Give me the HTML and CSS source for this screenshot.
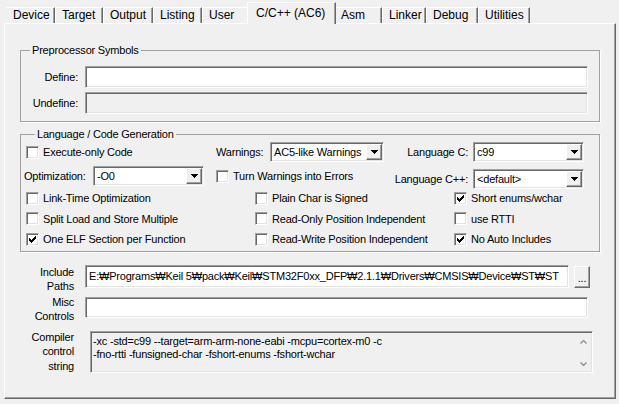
FILE: index.html
```html
<!DOCTYPE html>
<html lang="en">
<head>
    <meta charset="UTF-8">
    <title>Options for Target - C/C++ (AC6)</title>
    <link rel="stylesheet" href="styles.css">
</head>
<body>
    <div class="tabs">
        <div class="tab tab-device">Device</div>
        <div class="tab tab-target">Target</div>
        <div class="tab tab-output">Output</div>
        <div class="tab tab-listing">Listing</div>
        <div class="tab tab-user">User</div>
        <div class="tab active">C/C++ (AC6)</div>
        <div class="tab tab-asm">Asm</div>
        <div class="tab tab-linker">Linker</div>
        <div class="tab tab-debug">Debug</div>
        <div class="tab tab-utilities">Utilities</div>
    </div>

    <div class="panel">
        <fieldset class="group group-pre">
            <legend>Preprocessor Symbols</legend>
            <div class="pre-grid">
                <span class="lbl-right">Define:</span>
                <div class="edit"></div>
                <span class="lbl-right">Undefine:</span>
                <div class="edit disabled"></div>
            </div>
        </fieldset>

        <fieldset class="group group-lang">
            <legend>Language / Code Generation</legend>
            <div class="lang-row row-first">
                <label class="opt cell-first"><span class="check"></span>Execute-only Code</label>
                <span class="lbl-warn">Warnings:</span>
                <div class="combo combo-warn">
                    <span class="combo-text">AC5-like Warnings</span>
                    <span class="combo-btn"><svg width="7" height="4" viewBox="0 0 7 4"><path d="M0 0h7v1H0zM1 1h5v1H1zM2 2h3v1H2zM3 3h1v1H3z" fill="#000"/></svg></span>
                </div>
                <div class="right-field">
                    <span>Language C:</span>
                    <div class="combo combo-lang">
                        <span class="combo-text">c99</span>
                        <span class="combo-btn"><svg width="7" height="4" viewBox="0 0 7 4"><path d="M0 0h7v1H0zM1 1h5v1H1zM2 2h3v1H2zM3 3h1v1H3z" fill="#000"/></svg></span>
                    </div>
                </div>
            </div>
            <div class="lang-row row-second">
                <div class="cell-opt">
                    <span class="lbl-opt">Optimization:</span>
                    <div class="combo combo-opt">
                        <span class="combo-text">-O0</span>
                        <span class="combo-btn"><svg width="7" height="4" viewBox="0 0 7 4"><path d="M0 0h7v1H0zM1 1h5v1H1zM2 2h3v1H2zM3 3h1v1H3z" fill="#000"/></svg></span>
                    </div>
                </div>
                <label class="opt opt-turn"><span class="check"></span>Turn Warnings into Errors</label>
                <div class="right-field field-cpp">
                    <span>Language C++:</span>
                    <div class="combo combo-lang">
                        <span class="combo-text">&lt;default&gt;</span>
                        <span class="combo-btn"><svg width="7" height="4" viewBox="0 0 7 4"><path d="M0 0h7v1H0zM1 1h5v1H1zM2 2h3v1H2zM3 3h1v1H3z" fill="#000"/></svg></span>
                    </div>
                </div>
            </div>
            <div class="opt-grid">
                <label class="opt"><span class="check"></span>Link-Time Optimization</label>
                <label class="opt"><span class="check"></span>Plain Char is Signed</label>
                <label class="opt"><span class="check checked"><svg width="7" height="7" viewBox="0 0 7 7"><path d="M0 2h1v3H0zM1 3h1v3H1zM2 4h1v3H2zM3 3h1v3H3zM4 2h1v3H4zM5 1h1v3H5zM6 0h1v3H6z" fill="#000"/></svg></span>Short enums/wchar</label>

                <label class="opt"><span class="check"></span>Split Load and Store Multiple</label>
                <label class="opt"><span class="check"></span>Read-Only Position Independent</label>
                <label class="opt"><span class="check"></span>use RTTI</label>

                <label class="opt"><span class="check checked"><svg width="7" height="7" viewBox="0 0 7 7"><path d="M0 2h1v3H0zM1 3h1v3H1zM2 4h1v3H2zM3 3h1v3H3zM4 2h1v3H4zM5 1h1v3H5zM6 0h1v3H6z" fill="#000"/></svg></span>One ELF Section per Function</label>
                <label class="opt"><span class="check"></span>Read-Write Position Independent</label>
                <label class="opt"><span class="check checked"><svg width="7" height="7" viewBox="0 0 7 7"><path d="M0 2h1v3H0zM1 3h1v3H1zM2 4h1v3H2zM3 3h1v3H3zM4 2h1v3H4zM5 1h1v3H5zM6 0h1v3H6z" fill="#000"/></svg></span>No Auto Includes</label>
            </div>
        </fieldset>

        <div class="paths">
            <div class="path-label">Include<br>Paths</div>
            <div class="path-field">
                <div class="edit edit-include">E:₩Programs₩Keil 5₩pack₩Keil₩STM32F0xx_DFP₩2.1.1₩Drivers₩CMSIS₩Device₩ST₩ST</div>
                <div class="btn-browse">...</div>
            </div>
            <div class="path-label">Misc<br>Controls</div>
            <div class="edit edit-misc"></div>
            <div class="path-label label-compiler">Compiler<br>control<br>string</div>
            <div class="memo">
                <div class="memo-text">-xc -std=c99 --target=arm-arm-none-eabi -mcpu=cortex-m0 -c<br>-fno-rtti -funsigned-char -fshort-enums -fshort-wchar</div>
                <div class="memo-scroll">
                    <svg width="7" height="4" viewBox="0 0 7 4"><polyline points="0.5,3.5 3.5,0.5 6.5,3.5" fill="none" stroke="#8a8a8a" stroke-width="1.2"/></svg>
                    <svg width="7" height="4" viewBox="0 0 7 4"><polyline points="0.5,0.5 3.5,3.5 6.5,0.5" fill="none" stroke="#8a8a8a" stroke-width="1.2"/></svg>
                </div>
            </div>
        </div>
    </div>
</body>
</html>
```

FILE: styles.css
```css
* {
    box-sizing: border-box;
}
body {
    margin: 0;
    width: 619px;
    height: 404px;
    overflow: hidden;
    background-color: #f0f0f0;
    font-family: "Liberation Sans", "DejaVu Sans", sans-serif;
    font-size: 11px;
    letter-spacing: -0.2px;
    color: #000;
}

/* tab strip */
.tabs {
    display: flex;
    align-items: flex-end;
    height: 23px;
    padding-left: 6px;
}
.tab {
    height: 16px;
    line-height: 15px;
    padding-left: 6px;
    font-size: 12px;
    letter-spacing: 0;
    white-space: nowrap;
    border-top: 1px solid #fff;
    border-left: 1px solid #fff;
    border-right: 1px solid #696969;
    box-shadow: inset -1px 0 0 #a0a0a0;
}
.tab-device { width: 49px; border-left-color: transparent; }
.tab-target { width: 48px; }
.tab-output { width: 50px; }
.tab-listing { width: 49px; }
.tab-user { width: 47px; }
.tab-asm { width: 48px; }
.tab-linker { width: 44px; }
.tab-debug { width: 52px; }
.tab-utilities { width: 52px; }
.tab.active {
    position: relative;
    z-index: 2;
    width: 89px;
    height: 22px;
    margin: 0 -2px -1px;
    padding: 2px 0 0 8px;
    line-height: 16px;
    background-color: #f0f0f0;
}

/* main page */
.panel {
    width: 612px;
    height: 376px;
    margin-left: 4px;
    border: 1px solid;
    border-color: #fff #696969 #696969 #fff;
    box-shadow: inset -1px -1px 0 #a0a0a0;
    overflow: hidden;
}
.group {
    min-width: 0;
    margin: 19px 15px 0 15px;
    padding: 0;
    border: 1px solid #a0a0a0;
    box-shadow: 1px 1px 0 #fff;
}
.group legend {
    margin-left: 9px;
    padding: 0 2px;
    line-height: 14px;
}
.lbl-right {
    text-align: right;
}

.pre-grid {
    display: grid;
    grid-template-columns: 57px minmax(0, 1fr);
    grid-auto-rows: 22px;
    column-gap: 7px;
    row-gap: 4px;
    align-items: center;
    padding: 9px 11px 7px 0;
}

/* sunken edit */
.edit {
    height: 22px;
    min-width: 0;
    padding: 0 2px;
    display: flex;
    align-items: center;
    overflow: hidden;
    white-space: nowrap;
    background-color: #fff;
    border: 1px solid;
    border-color: #a0a0a0 #fff #fff #a0a0a0;
    box-shadow: inset 1px 1px 0 #696969, inset -1px -1px 0 #e3e3e3;
}
.edit.disabled {
    background-color: #f0f0f0;
}

/* language group */
.group-lang {
    margin-top: 5px;
    padding: 1px 15px 1px 5px;
}
.lang-row {
    display: flex;
    align-items: center;
}
.row-first {
    height: 20px;
}
.row-second {
    height: 26px;
    align-items: flex-start;
}
.cell-first {
    width: 190px;
}
.lbl-warn {
    width: 54px;
}
.right-field {
    margin-left: auto;
    display: flex;
    align-items: center;
    gap: 5px;
}
.field-cpp {
    margin-top: 7px;
}
.cell-opt {
    width: 192px;
    margin-left: -2px;
    margin-top: 4px;
    display: flex;
    align-items: center;
}
.lbl-opt {
    width: 69px;
}
.opt-turn {
    margin-top: 7px;
}
.opt-grid {
    display: grid;
    grid-template-columns: 229px 199px 1fr;
    grid-auto-rows: 20.5px;
    align-items: center;
}
.opt {
    display: flex;
    align-items: center;
    gap: 4px;
    white-space: nowrap;
    height: 14px;
}
.check {
    width: 13px;
    height: 13px;
    flex: none;
    display: flex;
    align-items: center;
    justify-content: center;
    background-color: #fff;
    border: 1px solid;
    border-color: #a0a0a0 #fff #fff #a0a0a0;
    box-shadow: inset 1px 1px 0 #696969, inset -1px -1px 0 #e3e3e3;
}
.check svg {
    display: block;
    shape-rendering: crispEdges;
}

/* drop-down list */
.combo {
    height: 20px;
    padding: 1px;
    display: flex;
    background-color: #fff;
    border: 1px solid;
    border-color: #a0a0a0 #fff #fff #a0a0a0;
    box-shadow: inset 1px 1px 0 #696969, inset -1px -1px 0 #e3e3e3;
}
.combo-warn { width: 114px; }
.combo-lang { width: 111px; }
.combo-opt { width: 111px; }
.combo-text {
    flex: 1;
    padding-left: 2px;
    display: flex;
    align-items: center;
    white-space: nowrap;
    overflow: hidden;
}
.combo-btn {
    width: 16px;
    display: flex;
    align-items: center;
    justify-content: center;
    background-color: #f0f0f0;
    border: 1px solid;
    border-color: #fff #696969 #696969 #fff;
    box-shadow: inset -1px -1px 0 #a0a0a0;
}
.combo-btn svg {
    display: block;
    shape-rendering: crispEdges;
}

/* paths and controls */
.paths {
    display: grid;
    grid-template-columns: 69px minmax(0, 1fr);
    grid-template-rows: 30px 35px 43px;
    column-gap: 11px;
    margin-top: 13px;
    padding-right: 22px;
}
.path-label {
    text-align: right;
    line-height: 14px;
}
.label-compiler {
    line-height: 14.5px;
}
.path-field {
    min-width: 0;
    display: flex;
    align-items: flex-start;
    gap: 5px;
    padding-right: 3px;
}
.edit-include {
    flex: 1;
    height: 23px;
    padding-left: 3px;
}
.btn-browse {
    flex: none;
    width: 16px;
    height: 22px;
    margin-top: 1px;
    display: flex;
    align-items: flex-end;
    justify-content: center;
    padding-bottom: 4px;
    line-height: 10px;
    background-color: #f0f0f0;
    border: 1px solid;
    border-color: #fff #696969 #696969 #fff;
    box-shadow: inset -1px -1px 0 #a0a0a0;
}
.edit-misc {
    height: 21px;
    margin: 2px 5px 0 0;
}
.memo {
    min-width: 0;
    height: 42px;
    margin: 1px 0 0 5px;
    display: flex;
    background-color: #f0f0f0;
    border: 1px solid;
    border-color: #a0a0a0 #fff #fff #a0a0a0;
    box-shadow: inset 1px 1px 0 #696969, inset -1px -1px 0 #e3e3e3;
}
.memo-text {
    flex: 1;
    min-width: 0;
    padding: 3px 0 0 2px;
    line-height: 13px;
    white-space: nowrap;
    overflow: hidden;
}
.memo-scroll {
    flex: none;
    width: 17px;
    display: flex;
    flex-direction: column;
    align-items: center;
    justify-content: space-between;
    padding: 8px 0 6px;
}
.memo-scroll svg {
    display: block;
}
```
